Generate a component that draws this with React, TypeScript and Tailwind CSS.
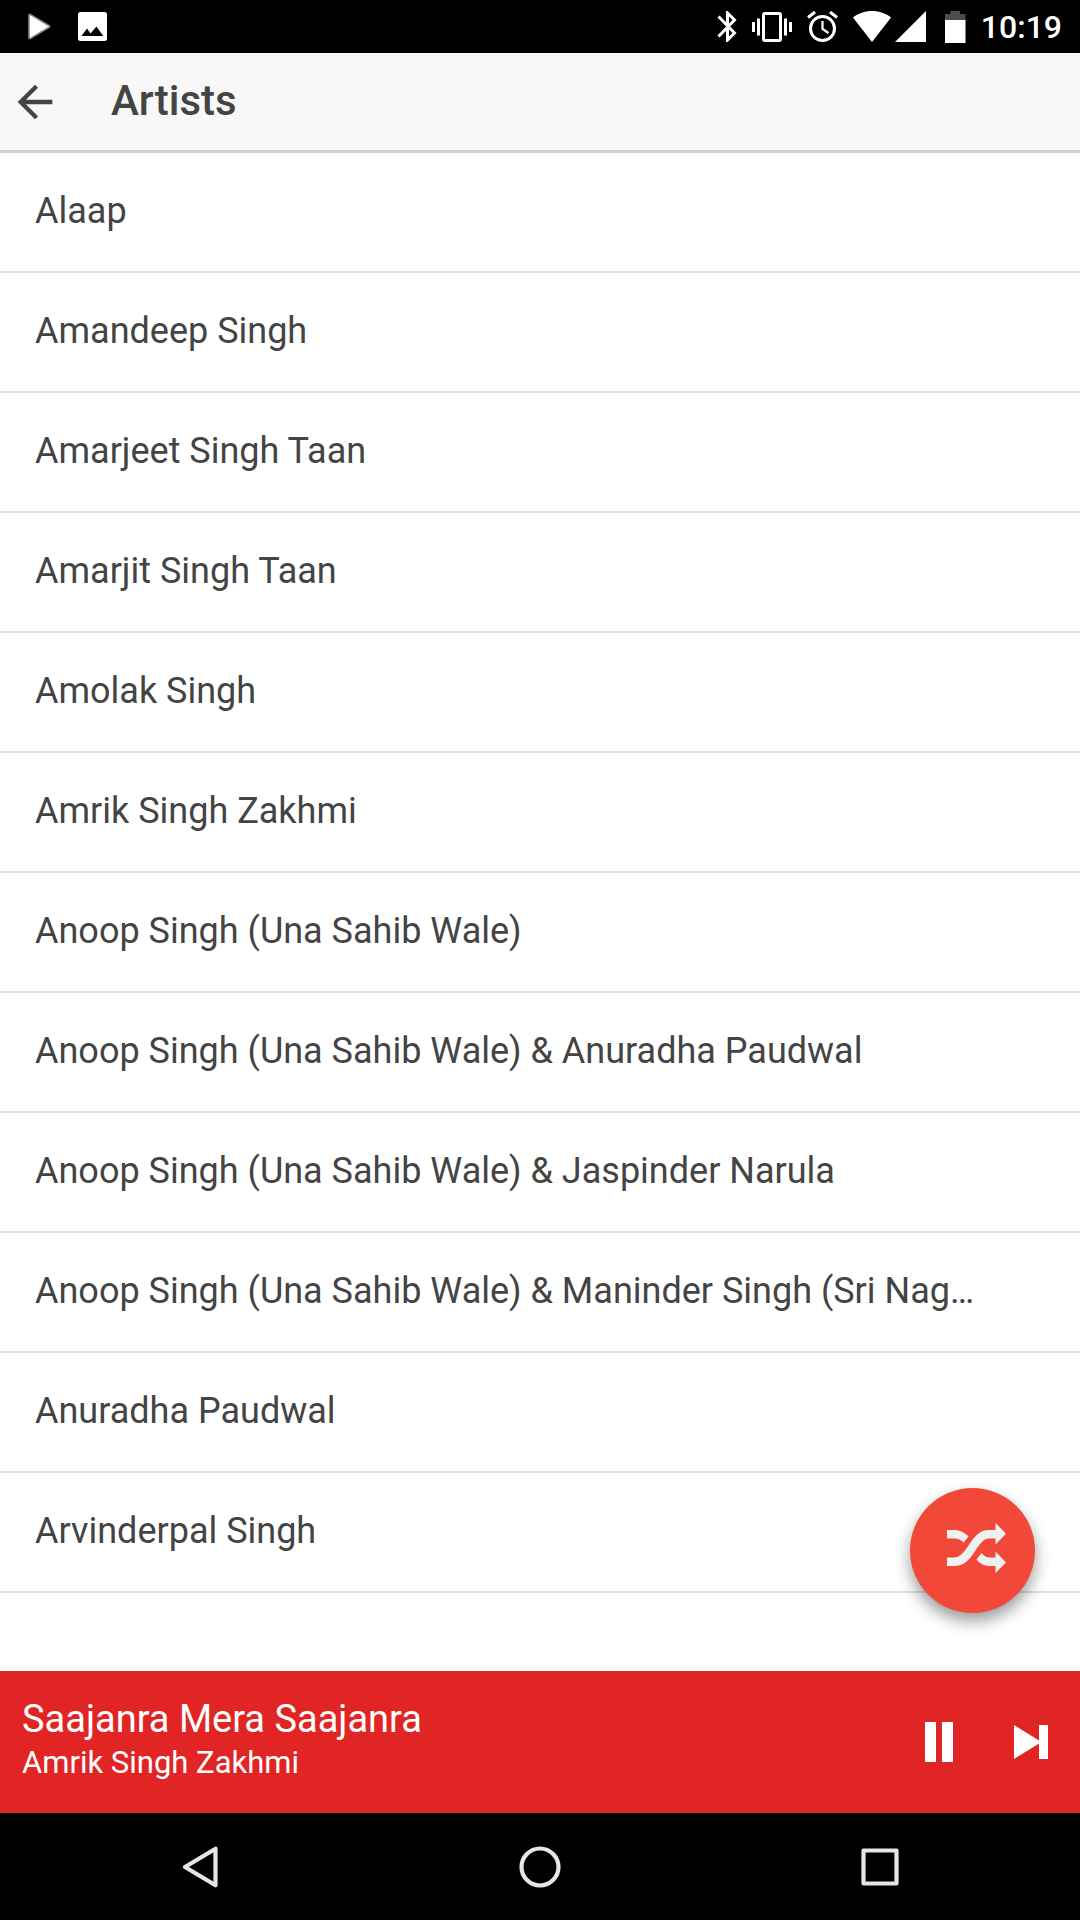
import { ReactNode, useState } from "react";

const artists = [
  "Alaap",
  "Amandeep Singh",
  "Amarjeet Singh Taan",
  "Amarjit Singh Taan",
  "Amolak Singh",
  "Amrik Singh Zakhmi",
  "Anoop Singh (Una Sahib Wale)",
  "Anoop Singh (Una Sahib Wale) & Anuradha Paudwal",
  "Anoop Singh (Una Sahib Wale) & Jaspinder Narula",
  "Anoop Singh (Una Sahib Wale) & Maninder Singh (Sri Nag…",
  "Anuradha Paudwal",
  "Arvinderpal Singh",
];

function StatusBar() {
  return (
    <div className="flex h-[53px] items-center justify-between bg-black pl-7 pr-[18px] text-white">
      <div className="flex items-center gap-[27px]">
        <svg width="23" height="27" viewBox="0 0 23 27">
          <path
            d="M1 2v23l1 .6L21.500 14v-1L2 1.400z"
            fill="#fff"
            stroke="#8a8a8a"
            strokeWidth="1.600"
            strokeLinejoin="round"
          />
        </svg>
        <svg width="29" height="29" viewBox="0 0 29 29">
          <rect width="29" height="29" rx="2.500" fill="#fff" />
          <path d="M3.500 24l5.500-7.500 3.500 5 6-7 6.700 9.500z" fill="#000" />
        </svg>
      </div>
      <div className="flex items-center gap-[15px]">
        <svg width="20" height="31" viewBox="0 0 20 31" fill="none">
          <path
            d="M1.500 5.500l16 16.500-7 7V2l7 7-16 16.500"
            stroke="#fff"
            strokeWidth="3"
          />
        </svg>
        <svg width="40" height="30" viewBox="0 0 40 30">
          <path
            d="M0 10h3v10H0zM5 6.500h3v17H5zM32 6.500h3v17h-3zM37 10h3v10h-3z"
            fill="#fff"
          />
          <rect
            x="11.500"
            y="1.500"
            width="17"
            height="27"
            rx="1.500"
            fill="none"
            stroke="#fff"
            strokeWidth="3"
          />
        </svg>
        <svg width="31" height="31" viewBox="0 0 31 31" fill="none">
          <circle cx="15.500" cy="17.500" r="12" stroke="#fff" strokeWidth="3" />
          <path
            d="M1 6.500l7-5.500M30 6.500L23 1"
            stroke="#fff"
            strokeWidth="3"
          />
          <path d="M15.500 10v8l6 4" stroke="#fff" strokeWidth="2.200" />
        </svg>
        <div className="flex items-center gap-1">
          <svg width="38" height="31" viewBox="0 0 38 31" fill="#fff">
            <path d="M19 31L0 6.500C5 2.500 11.500 0 19 0s14 2.500 19 6.500z" />
          </svg>
          <svg width="31" height="31" viewBox="0 0 31 31" fill="#fff">
            <path d="M31 0v31H0z" />
          </svg>
        </div>
        <div className="flex items-center gap-[15px] pl-1">
          <svg width="21" height="32" viewBox="0 0 21 32">
            <path d="M5.500 0h9.500v3h5.500v6.500H0V3h5.500z" fill="#4d4d4d" />
            <path d="M0 9h20.500v23H0z" fill="#fff" />
          </svg>
          <span className="text-[32px] font-medium leading-none">10:19</span>
        </div>
      </div>
    </div>
  );
}

function Header() {
  return (
    <header className="flex h-[100px] items-center gap-[50px] border-b-[3px] border-[#d0d0d0] bg-[#f8f8f8] pl-[9px] text-[#444]">
      <button aria-label="Back">
        <svg width="52" height="52" viewBox="0 0 24 24" fill="currentColor">
          <path d="M20 11H7.830l5.590-5.590L12 4l-8 8 8 8 1.410-1.410L7.830 13H20z" />
        </svg>
      </button>
      <h1 className="pb-[2px] text-[42px] font-medium leading-[48px]">Artists</h1>
    </header>
  );
}

function ShuffleButton() {
  return (
    <button
      aria-label="Shuffle"
      className="absolute bottom-[58px] right-[45px] flex size-[125px] items-center justify-center rounded-full bg-[#f1483a] pl-2 shadow-[0_8px_16px_rgba(0,0,0,0.4)]"
    >
      <svg
        className="mb-[5px]"
        width="59"
        height="50"
        viewBox="0 0 59 50"
        fill="#f0f0f0"
      >
        <path d="M0 7h7c6 0 10.500 2.500 14.500 6.500L16.500 19.500C14 17 11.500 15.500 7 15.500H0z" />
        <path d="M0 34.500h7c5.500 0 9-4 14.500-12C28 13 32.500 7 42 7h6.500V0L59 10.700 48.500 21.500v-6H42c-5 0-8.500 4.500-13.500 12C22 37.500 17 43 7 43H0z" />
        <path d="M34.500 30c2.500 3 5 4.500 8.500 4.500h5.500v-6L59 39.500 48.500 50v-7H43c-6 0-10-2.500-13.500-6.500z" />
      </svg>
    </button>
  );
}

function Player() {
  const [playing, setPlaying] = useState(true);

  return (
    <section className="flex h-[142px] items-center justify-between bg-[#e12525] pl-[22px] pr-8 text-white">
      <div className="pb-1">
        <h2 className="text-[38px] leading-[45px]">Saajanra Mera Saajanra</h2>
        <p className="text-[31px] leading-[42px]">Amrik Singh Zakhmi</p>
      </div>
      <div className="flex items-center gap-[61px]">
        <button
          aria-label={playing ? "Pause" : "Play"}
          onClick={() => setPlaying(!playing)}
        >
          <svg width="28" height="40" viewBox="0 0 28 40" fill="#fff">
            {playing ? (
              <path d="M0 0h11v40H0zM17 0h11v40H17z" />
            ) : (
              <path d="M0 0l28 20L0 40z" />
            )}
          </svg>
        </button>
        <button aria-label="Next">
          <svg width="34" height="34" viewBox="0 0 34 34" fill="#fff">
            <path d="M0 0l25 15.500V0h9v34h-9V18.500L0 34z" />
          </svg>
        </button>
      </div>
    </section>
  );
}

function NavButton({ label, children }: { label: string; children: ReactNode }) {
  return (
    <button aria-label={label} className="flex items-center justify-center">
      <svg
        width="42"
        height="42"
        viewBox="0 0 42 42"
        fill="none"
        stroke="#e6e6e6"
        strokeWidth="4.200"
        strokeLinejoin="round"
      >
        {children}
      </svg>
    </button>
  );
}

export default function App() {
  return (
    <div className="flex min-h-screen flex-col bg-white font-[Roboto,sans-serif]">
      <StatusBar />
      <Header />
      <main className="relative flex-1">
        <ul>
          {artists.map((artist) => (
            <li key={artist} className="border-b-2 border-[#dedede]">
              <a
                href="#"
                className="block truncate pb-9 pl-[35px] pr-[72px] pt-[34px] text-[36px] leading-[48px] text-[#444]"
              >
                {artist}
              </a>
            </li>
          ))}
        </ul>
        <ShuffleButton />
      </main>
      <Player />
      <nav className="grid h-[107px] grid-cols-3 bg-black px-[30px]">
        <NavButton label="Back">
          <path d="M6 21L36.500 2.700v36.600z" />
        </NavButton>
        <NavButton label="Home">
          <circle cx="21" cy="21" r="18.500" />
        </NavButton>
        <NavButton label="Recent apps">
          <rect x="4.500" y="4.500" width="33" height="33" />
        </NavButton>
      </nav>
    </div>
  );
}
